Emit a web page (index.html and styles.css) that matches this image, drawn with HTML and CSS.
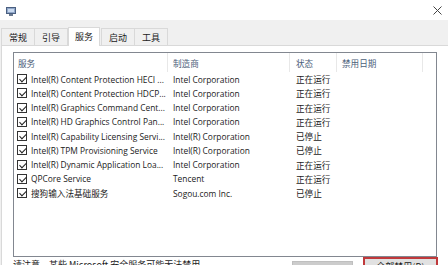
FILE: index.html
```html
<!DOCTYPE html>
<html lang="zh-CN">
<head>
<meta charset="utf-8">
<link rel="stylesheet" href="styles.css">
</head>
<body>
<div class="window">
  <div class="titlebar">
    <svg class="appicon" width="10" height="9" viewBox="0 0 10 9">
      <rect x="0.5" y="0.5" width="9" height="6" fill="#8fa6c8" stroke="#4a5f80"/>
      <rect x="2" y="2" width="6" height="3" fill="#c9d9ef"/>
      <rect x="3" y="7" width="4" height="2" fill="#6b7a90"/>
    </svg>
    <svg class="close" width="9" height="9" viewBox="0 0 9 9">
      <path d="M0.5 0.5 L8.5 8.5 M8.5 0.5 L0.5 8.5" stroke="#444" stroke-width="1"/>
    </svg>
  </div>
  <div class="tabstrip">
    <div class="tab">常规</div>
    <div class="tab">引导</div>
    <div class="tab active">服务</div>
    <div class="tab">启动</div>
    <div class="tab">工具</div>
  </div>
  <div class="page">
    <div class="listbox">
      <div class="row header">
        <div class="cell c1 hd">服务</div>
        <div class="cell c2 hd">制造商</div>
        <div class="cell c3 hd">状态</div>
        <div class="cell c4 hd">禁用日期</div>
      </div>
      <div class="row"><div class="cell c1"><span class="cb"></span>Intel(R) Content Protection HECI ...</div><div class="cell c2">Intel Corporation</div><div class="cell c3">正在运行</div><div class="cell c4"></div></div>
      <div class="row"><div class="cell c1"><span class="cb"></span>Intel(R) Content Protection HDCP...</div><div class="cell c2">Intel Corporation</div><div class="cell c3">正在运行</div><div class="cell c4"></div></div>
      <div class="row"><div class="cell c1"><span class="cb"></span>Intel(R) Graphics Command Cent...</div><div class="cell c2">Intel Corporation</div><div class="cell c3">正在运行</div><div class="cell c4"></div></div>
      <div class="row"><div class="cell c1"><span class="cb"></span>Intel(R) HD Graphics Control Pan...</div><div class="cell c2">Intel Corporation</div><div class="cell c3">正在运行</div><div class="cell c4"></div></div>
      <div class="row"><div class="cell c1"><span class="cb"></span>Intel(R) Capability Licensing Servi...</div><div class="cell c2">Intel(R) Corporation</div><div class="cell c3">已停止</div><div class="cell c4"></div></div>
      <div class="row"><div class="cell c1"><span class="cb"></span>Intel(R) TPM Provisioning Service</div><div class="cell c2">Intel(R) Corporation</div><div class="cell c3">已停止</div><div class="cell c4"></div></div>
      <div class="row"><div class="cell c1"><span class="cb"></span>Intel(R) Dynamic Application Loa...</div><div class="cell c2">Intel Corporation</div><div class="cell c3">正在运行</div><div class="cell c4"></div></div>
      <div class="row"><div class="cell c1"><span class="cb"></span>QPCore Service</div><div class="cell c2">Tencent</div><div class="cell c3">正在运行</div><div class="cell c4"></div></div>
      <div class="row"><div class="cell c1"><span class="cb"></span><span class="cjk">搜狗输入法基础服务</span></div><div class="cell c2">Sogou.com Inc.</div><div class="cell c3">已停止</div><div class="cell c4"></div></div>
    </div>
    <div class="footer">
      <div class="note">请注意，某些 Microsoft 安全服务可能无法禁用。</div>
      <div class="buttons">
        <div class="btn gray">全部启用(E)</div>
        <div class="btn red">全部禁用(D)</div>
      </div>
    </div>
  </div>
</div>
</body>
</html>
```
FILE: styles.css
```css
* { box-sizing: border-box; }
html, body { margin: 0; padding: 0; }
body {
  width: 448px;
  height: 265px;
  overflow: hidden;
  background: #f0f0f0;
  font-family: "Open Sans", "Noto Sans CJK SC", sans-serif;
  font-size: 8.4px;
  color: #1a1a1a;
}
.window { width: 448px; height: 265px; display: flex; flex-direction: column; overflow: hidden; }
.titlebar {
  flex: none;
  height: 20px;
  background: #ffffff;
  display: flex;
  align-items: center;
  justify-content: space-between;
  padding: 0 3px 0 6px;
}
.appicon { margin-top: 2px; }
.close { margin-right: 3px; }
.tabstrip {
  flex: none;
  height: 25px;
  display: flex;
  align-items: flex-end;
  padding-left: 1px;
  background: #f0f0f0;
}
.tab {
  flex: none;
  width: 34px;
  height: 17px;
  margin-right: -1px;
  display: flex;
  align-items: center;
  justify-content: center;
  font-family: "Noto Sans CJK SC", sans-serif;
  font-size: 9px;
  color: #222;
  border: 1px solid #d9d9d9;
  border-bottom: none;
  background: #f0f0f0;
}
.tab.active {
  width: 32px;
  margin: 0 1px -1px 1px;
  height: 19px;
  padding-bottom: 2px;
  background: #ffffff;
  position: relative;
  z-index: 1;
}
.page {
  flex: 1;
  min-height: 0;
  background: #ffffff;
  border-top: 1px solid #d9d9d9;
  border-left: 1px solid #d9d9d9;
  margin-left: 1px;
  padding: 6px 0 0 11px;
}
.listbox {
  width: 424px;
  height: 205px;
  border: 1px solid #828790;
  background: #ffffff;
}
.row {
  display: grid;
  grid-template-columns: 154px 122px 47px 86px;
  height: 14.25px;
  align-items: center;
  white-space: nowrap;
}
.row.header { height: 19px; }
.cell { overflow: hidden; display: flex; align-items: center; height: 100%; }
.hd {
  font-family: "Noto Sans CJK SC", sans-serif;
  font-size: 8.6px;
  color: #4c607a;
  border-right: 1px solid #e8e8e8;
}
.c1 { padding-left: 3px; }
.hd.c1 { padding-left: 4px; }
.c2 { padding-left: 5px; }
.c3 { padding-left: 6px; font-family: "Noto Sans CJK SC", sans-serif; font-size: 8.6px; }
.c4 { padding-left: 5px; }
.cjk { font-family: "Noto Sans CJK SC", sans-serif; font-size: 8.6px; }
.cb {
  width: 10px;
  height: 10px;
  border: 1px solid #333;
  margin-right: 4px;
  flex: none;
  position: relative;
  background: #fff;
}
.cb::after {
  content: "";
  position: absolute;
  left: 2.5px;
  top: 0px;
  width: 3px;
  height: 6px;
  border: solid #222;
  border-width: 0 1px 1px 0;
  transform: rotate(45deg);
}
.footer {
  display: flex;
  justify-content: space-between;
  align-items: flex-start;
  padding-right: 10px;
}
.note {
  font-family: "Noto Sans CJK SC", sans-serif;
  font-size: 9px;
  margin-top: 1px;
}
.buttons { display: flex; gap: 10px; }
.btn {
  font-family: "Noto Sans CJK SC", sans-serif;
  font-size: 9px;
  height: 18px;
  display: flex;
  align-items: center;
  justify-content: center;
}
.btn.gray { width: 61px; background: #cccccc; border: 1px solid #bfbfbf; margin-top: 4px; color: #8a8a8a; }
.btn.red { width: 75px; background: #e1e1e1; border: 2px solid #c0393b; margin-top: 0; }
```
